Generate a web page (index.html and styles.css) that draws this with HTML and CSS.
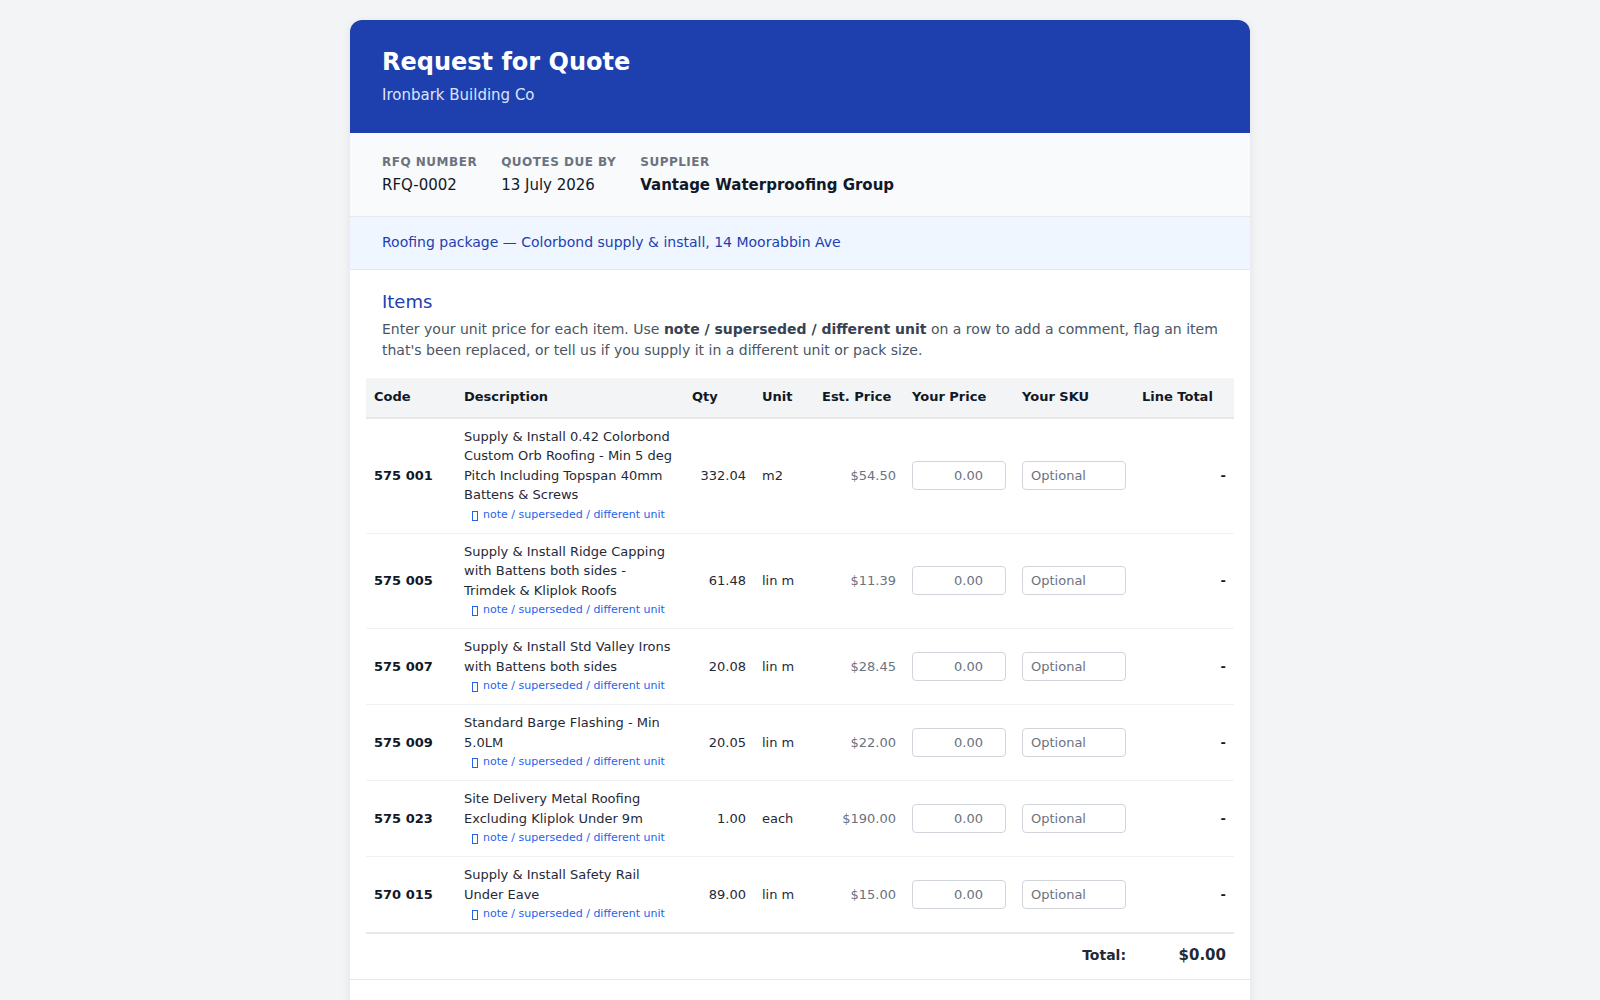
FILE: index.html
```html
<!DOCTYPE html>
<html lang="en">
<head>
<meta charset="utf-8">
<title>Request for Quote</title>
<link rel="stylesheet" href="styles.css">
</head>
<body>
<div class="page">
  <div class="card">
    <header class="card-header">
      <h1 class="title">Request for Quote</h1>
      <div class="subtitle">Ironbark Building Co</div>
    </header>

    <section class="meta">
      <div class="meta-item">
        <div class="meta-label">RFQ Number</div>
        <div class="meta-value">RFQ-0002</div>
      </div>
      <div class="meta-item">
        <div class="meta-label">Quotes Due By</div>
        <div class="meta-value">13 July 2026</div>
      </div>
      <div class="meta-item">
        <div class="meta-label">Supplier</div>
        <div class="meta-value meta-strong">Vantage Waterproofing Group</div>
      </div>
    </section>

    <div class="summary">Roofing package — Colorbond supply &amp; install, 14 Moorabbin Ave</div>

    <section class="items">
      <div class="items-intro">
        <h2 class="items-title">Items</h2>
        <p class="items-help">Enter your unit price for each item. Use <strong>note / superseded / different unit</strong> on a row to add a comment, flag an item that's been replaced, or tell us if you supply it in a different unit or pack size.</p>
      </div>

      <table class="items-table">
        <colgroup>
          <col class="col-code">
          <col class="col-desc">
          <col class="col-qty">
          <col class="col-unit">
          <col class="col-est">
          <col class="col-price">
          <col class="col-sku">
          <col class="col-total">
        </colgroup>
        <thead>
          <tr>
            <th>Code</th>
            <th>Description</th>
            <th>Qty</th>
            <th>Unit</th>
            <th>Est. Price</th>
            <th>Your Price</th>
            <th>Your SKU</th>
            <th>Line Total</th>
          </tr>
        </thead>
        <tbody>
          <tr>
            <td class="code">575 001</td>
            <td class="desc">Supply &amp; Install 0.42 Colorbond Custom Orb Roofing - Min 5 deg Pitch Including Topspan 40mm Battens &amp; Screws
              <a class="note" href="#"><svg class="note-icon" width="6" height="10" viewBox="0 0 6 10"><rect x="0.5" y="0.5" width="5" height="9" fill="none" stroke="currentColor" stroke-width="1"/></svg>note / superseded / different unit</a></td>
            <td class="num">332.04</td>
            <td>m2</td>
            <td class="num est">$54.50</td>
            <td><input class="field field-price" type="text" placeholder="0.00"></td>
            <td><input class="field" type="text" placeholder="Optional"></td>
            <td class="num line-total">-</td>
          </tr>
          <tr>
            <td class="code">575 005</td>
            <td class="desc">Supply &amp; Install Ridge Capping with Battens both sides - Trimdek &amp; Kliplok Roofs
              <a class="note" href="#"><svg class="note-icon" width="6" height="10" viewBox="0 0 6 10"><rect x="0.5" y="0.5" width="5" height="9" fill="none" stroke="currentColor" stroke-width="1"/></svg>note / superseded / different unit</a></td>
            <td class="num">61.48</td>
            <td>lin m</td>
            <td class="num est">$11.39</td>
            <td><input class="field field-price" type="text" placeholder="0.00"></td>
            <td><input class="field" type="text" placeholder="Optional"></td>
            <td class="num line-total">-</td>
          </tr>
          <tr>
            <td class="code">575 007</td>
            <td class="desc">Supply &amp; Install Std Valley Irons with Battens both sides
              <a class="note" href="#"><svg class="note-icon" width="6" height="10" viewBox="0 0 6 10"><rect x="0.5" y="0.5" width="5" height="9" fill="none" stroke="currentColor" stroke-width="1"/></svg>note / superseded / different unit</a></td>
            <td class="num">20.08</td>
            <td>lin m</td>
            <td class="num est">$28.45</td>
            <td><input class="field field-price" type="text" placeholder="0.00"></td>
            <td><input class="field" type="text" placeholder="Optional"></td>
            <td class="num line-total">-</td>
          </tr>
          <tr>
            <td class="code">575 009</td>
            <td class="desc">Standard Barge Flashing - Min 5.0LM
              <a class="note" href="#"><svg class="note-icon" width="6" height="10" viewBox="0 0 6 10"><rect x="0.5" y="0.5" width="5" height="9" fill="none" stroke="currentColor" stroke-width="1"/></svg>note / superseded / different unit</a></td>
            <td class="num">20.05</td>
            <td>lin m</td>
            <td class="num est">$22.00</td>
            <td><input class="field field-price" type="text" placeholder="0.00"></td>
            <td><input class="field" type="text" placeholder="Optional"></td>
            <td class="num line-total">-</td>
          </tr>
          <tr>
            <td class="code">575 023</td>
            <td class="desc">Site Delivery Metal Roofing Excluding Kliplok Under 9m
              <a class="note" href="#"><svg class="note-icon" width="6" height="10" viewBox="0 0 6 10"><rect x="0.5" y="0.5" width="5" height="9" fill="none" stroke="currentColor" stroke-width="1"/></svg>note / superseded / different unit</a></td>
            <td class="num">1.00</td>
            <td>each</td>
            <td class="num est">$190.00</td>
            <td><input class="field field-price" type="text" placeholder="0.00"></td>
            <td><input class="field" type="text" placeholder="Optional"></td>
            <td class="num line-total">-</td>
          </tr>
          <tr>
            <td class="code">570 015</td>
            <td class="desc">Supply &amp; Install Safety Rail Under Eave
              <a class="note" href="#"><svg class="note-icon" width="6" height="10" viewBox="0 0 6 10"><rect x="0.5" y="0.5" width="5" height="9" fill="none" stroke="currentColor" stroke-width="1"/></svg>note / superseded / different unit</a></td>
            <td class="num">89.00</td>
            <td>lin m</td>
            <td class="num est">$15.00</td>
            <td><input class="field field-price" type="text" placeholder="0.00"></td>
            <td><input class="field" type="text" placeholder="Optional"></td>
            <td class="num line-total">-</td>
          </tr>
        </tbody>
        <tfoot>
          <tr>
            <td class="total-label" colspan="7">Total:</td>
            <td class="total-value">$0.00</td>
          </tr>
        </tfoot>
      </table>
    </section>

    <section class="card-footer"></section>
  </div>
</div>
</body>
</html>
```

FILE: styles.css
```css
* {
  box-sizing: border-box;
}

html, body {
  margin: 0;
  padding: 0;
}

body {
  background: #f3f4f6;
  font-family: "DejaVu Sans", "Noto Sans", sans-serif;
  color: #1f2937;
}

.page {
  padding: 20px 0 40px;
}

.card {
  width: 900px;
  margin: 0 auto;
  background: #ffffff;
  border-radius: 12px;
  box-shadow: 0 2px 10px rgba(15, 23, 42, 0.08);
  overflow: hidden;
}

/* Header */
.card-header {
  background: #1e40af;
  color: #ffffff;
  padding: 27px 32px 27px;
}

.title {
  margin: 0;
  font-size: 24px;
  line-height: 30px;
  font-weight: bold;
}

.subtitle {
  margin-top: 7px;
  font-size: 15px;
  line-height: 22px;
  color: #dbe4fb;
}

/* Meta */
.meta {
  display: flex;
  gap: 24px;
  padding: 21px 32px 20px;
  background: #f8fafc;
  border-bottom: 1px solid #e5e9f0;
}

.meta-label {
  font-size: 12px;
  line-height: 17px;
  font-weight: bold;
  letter-spacing: 0.5px;
  text-transform: uppercase;
  color: #6b7280;
}

.meta-value {
  margin-top: 3px;
  font-size: 15px;
  line-height: 22px;
  color: #111827;
}

.meta-strong {
  font-weight: bold;
}

/* Summary bar */
.summary {
  padding: 15px 32px 16px;
  background: #eff6ff;
  border-bottom: 1px solid #e2e8f0;
  color: #1e40af;
  font-size: 14px;
  line-height: 21px;
}

/* Items */
.items {
  padding: 19px 16px 2px;
  border-bottom: 1px solid #e5e7eb;
}

.items-intro {
  padding: 0 16px;
}

.items-title {
  margin: 0;
  font-size: 18px;
  line-height: 25px;
  font-weight: normal;
  color: #1e40af;
}

.items-help {
  margin: 5px 0 0;
  font-size: 14px;
  line-height: 21px;
  color: #4b5563;
}

.items-help strong {
  color: #374151;
}

.items-table {
  width: 100%;
  margin-top: 17px;
  border-collapse: collapse;
  table-layout: fixed;
  font-size: 13px;
  line-height: 19.5px;
}

.col-code { width: 90px; }
.col-desc { width: 228px; }
.col-qty { width: 70px; }
.col-unit { width: 60px; }
.col-est { width: 90px; }
.col-price { width: 110px; }
.col-sku { width: 120px; }
.col-total { width: 100px; }

.items-table th {
  background: #f3f4f6;
  border-bottom: 2px solid #e5e7eb;
  padding: 9px 8px 10px;
  text-align: left;
  font-weight: bold;
  color: #111827;
  white-space: nowrap;
}

.items-table td {
  padding: 8px;
  vertical-align: middle;
  color: #1f2937;
}

.items-table tbody tr + tr td {
  border-top: 1px solid #f0f1f4;
}

.items-table td.code {
  font-weight: bold;
  color: #111827;
}

.items-table td.desc {
  vertical-align: top;
}

.items-table td.num {
  text-align: right;
}

.items-table td.est {
  color: #6b7280;
}

.items-table td.line-total {
  font-weight: bold;
  color: #111827;
}

.note {
  display: flex;
  align-items: center;
  gap: 5px;
  margin: 1px 0 1px 8px;
  font-size: 11px;
  line-height: 18px;
  color: #2563eb;
  text-decoration: none;
}

.note-icon {
  flex: none;
  margin-top: 2px;
}

.field {
  display: block;
  width: 100%;
  height: 29px;
  padding: 6px 8px;
  border: 1px solid #d1d5db;
  border-radius: 4px;
  background: #ffffff;
  font-family: inherit;
  font-size: 13px;
  color: #111827;
}

.field::placeholder {
  color: #6b7280;
  opacity: 1;
}

.field-price {
  text-align: right;
  padding-right: 22px;
}

.items-table tfoot td {
  border-top: 2px solid #e5e7eb;
  padding: 12px 8px 11px;
  font-weight: bold;
  color: #1f2937;
  text-align: right;
}

.items-table td.total-label {
  font-size: 14px;
}

.items-table td.total-value {
  font-size: 15px;
}

/* Footer area below the items */
.card-footer {
  height: 80px;
  background: #ffffff;
}
```
